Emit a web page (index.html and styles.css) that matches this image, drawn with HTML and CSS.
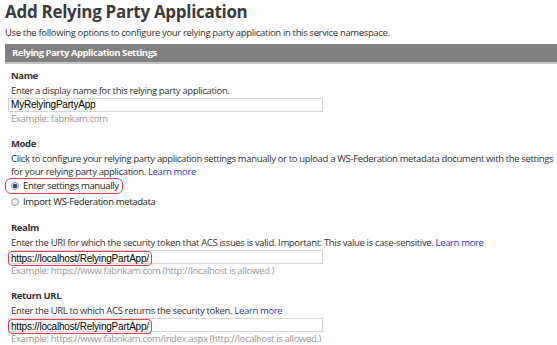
FILE: index.html
```html
<!DOCTYPE html>
<html>
<head>
  <meta charset="utf-8" />
  <title>Add Relying Party Application</title>
  <meta name="viewport" content="width=device-width, initial-scale=1">
  <link rel="stylesheet" href="styles.css">
</head>
<body>
  <div class="page">
    <h1 class="title">Add Relying Party Application</h1>
    <p class="intro">Use the following options to configure your relying party application in this service namespace.</p>

    <div class="section-head">Relying Party Application Settings</div>

    <div class="section">
      <div class="field">
        <div class="label">Name</div>
        <div class="desc">Enter a display name for this relying party application.</div>
        <div class="input">MyRelyingPartyApp</div>
        <div class="example">Example: fabrikam.com</div>
      </div>

      <div class="field">
        <div class="label">Mode</div>
        <div class="desc nowrap">Click to configure your relying party application settings manually or to upload a WS-Federation metadata document with the settings<br>for your relying party application. <a href="#">Learn more</a></div>
        <div class="radios">
          <label class="radio mark"><span class="dot checked"></span>Enter settings manually</label>
          <label class="radio"><span class="dot"></span>Import WS-Federation metadata</label>
        </div>
      </div>

      <div class="field">
        <div class="label">Realm</div>
        <div class="desc">Enter the URI for which the security token that ACS issues is valid. Important: This value is case-sensitive. <a href="#">Learn more</a></div>
        <div class="input"><span class="mark-text">https://localhost/RelyingPartApp/</span></div>
        <div class="example">Example: https://www.fabrikam.com (http://localhost is allowed.)</div>
      </div>

      <div class="field">
        <div class="label">Return URL</div>
        <div class="desc">Enter the URL to which ACS returns the security token. <a href="#">Learn more</a></div>
        <div class="input"><span class="mark-text">https://localhost/RelyingPartApp/</span></div>
        <div class="example">Example: https://www.fabrikam.com/index.aspx (http://localhost is allowed.)</div>
      </div>
    </div>
  </div>
</body>
</html>
```

FILE: styles.css
```css
html, body {
  margin: 0px;
  padding: 0px;
  background: #fff;
}
.page {
  font-family: "Open Sans", "Noto Sans", sans-serif;
  font-size: 9.5px;
  letter-spacing: -0.35px;
  color: #333;
  padding: 0 0 0 5px;
}
.title {
  margin: 0;
  padding-top: 1px;
  font-size: 17px;
  letter-spacing: -0.3px;
  line-height: 22px;
  font-weight: bold;
  color: #3b3b3b;
}
.intro {
  margin: 3px 0 0 0;
  line-height: 13px;
}
.section-head {
  margin-top: 5px;
  background: #808080;
  border-bottom: 2px solid #c4c4c4;
  color: #fff;
  font-weight: bold;
  letter-spacing: -0.45px;
  line-height: 18px;
  padding-left: 7px;
}
.section {
  padding: 4px 0 0 6px;
}
.field {
  margin-bottom: 11px;
}
.label {
  font-weight: bold;
  letter-spacing: -0.4px;
  line-height: 16px;
}
.desc {
  line-height: 13px;
}
.nowrap {
  white-space: nowrap;
}
.desc a {
  color: #3333ee;
  text-decoration: none;
}
.input {
  margin: 1px 0 0 -3px;
  width: 311px;
  height: 12px;
  border: 1px solid #d6d6d6;
  font-family: "Liberation Sans", Arial, sans-serif;
  font-size: 10px;
  letter-spacing: -0.2px;
  line-height: 12px;
  color: #000;
  padding-left: 2px;
}
.mark-text {
  display: inline-block;
  margin-left: -3px;
  padding: 1px 2px 0 2px;
  border: 1px solid #e04050;
  border-radius: 4px;
  line-height: 12px;
}
.example {
  color: #999;
  line-height: 13px;
}
.radio {
  display: flex;
  align-items: center;
  gap: 4px;
  line-height: 15px;
  color: #222;
}
.radio.mark {
  width: fit-content;
  line-height: 14px;
  margin-left: -6px;
  padding: 0 3px 0 5px;
  border: 1px solid #e04050;
  border-radius: 6px;
}
.dot {
  width: 8px;
  height: 8px;
  border-radius: 50%;
  border: 1px solid #9a9a9a;
  background: #eee;
  box-sizing: border-box;
}
.dot.checked {
  background: radial-gradient(circle, #2a4a8a 0 2px, #e4e4e4 2.5px);
}
```
